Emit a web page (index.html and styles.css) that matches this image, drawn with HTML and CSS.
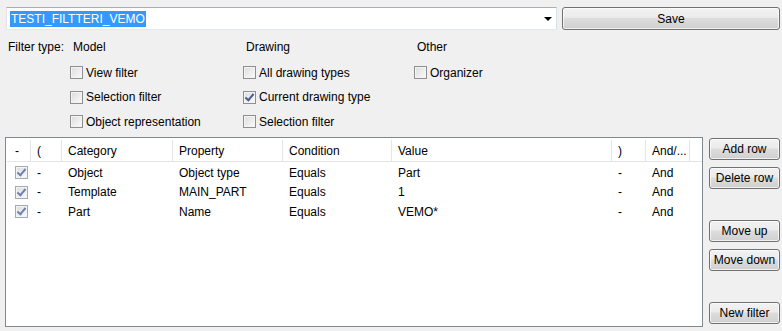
FILE: index.html
```html
<!DOCTYPE html>
<html lang="en">
<head>
    <meta charset="UTF-8">
    <title>Filter</title>
    <link rel="stylesheet" href="styles.css">
</head>
<body>

<!-- Filter name and save -->
<div class="top-row">
    <div class="combo">
        <span class="combo-text">TESTI_FILTTERI_VEMO</span>
        <span class="combo-arrow"></span>
    </div>
    <button class="btn save-btn">Save</button>
</div>

<!-- Filter type options -->
<div class="filter-types">
    <div class="ft-label">Filter type:</div>
    <div class="ft-head">Model</div>
    <div class="ft-head">Drawing</div>
    <div class="ft-head">Other</div>

    <div></div>
    <label class="check"><span class="box"></span>View filter</label>
    <label class="check"><span class="box"></span>All drawing types</label>
    <label class="check"><span class="box"></span>Organizer</label>

    <div></div>
    <label class="check"><span class="box"></span>Selection filter</label>
    <label class="check"><span class="box checked"></span>Current drawing type</label>
    <div></div>

    <div></div>
    <label class="check"><span class="box"></span>Object representation</label>
    <label class="check"><span class="box"></span>Selection filter</label>
    <div></div>
</div>

<!-- Rule table and actions -->
<div class="main">
    <div class="list">
        <div class="row head">
            <div class="cell">-</div>
            <div class="cell">(</div>
            <div class="cell">Category</div>
            <div class="cell">Property</div>
            <div class="cell">Condition</div>
            <div class="cell">Value</div>
            <div class="cell">)</div>
            <div class="cell">And/...</div>
            <div class="cell last"></div>
        </div>
        <div class="row">
            <div class="cell"><span class="box checked soft"></span></div>
            <div class="cell">-</div>
            <div class="cell">Object</div>
            <div class="cell">Object type</div>
            <div class="cell">Equals</div>
            <div class="cell">Part</div>
            <div class="cell">-</div>
            <div class="cell">And</div>
            <div class="cell last"></div>
        </div>
        <div class="row">
            <div class="cell"><span class="box checked soft"></span></div>
            <div class="cell">-</div>
            <div class="cell">Template</div>
            <div class="cell">MAIN_PART</div>
            <div class="cell">Equals</div>
            <div class="cell">1</div>
            <div class="cell">-</div>
            <div class="cell">And</div>
            <div class="cell last"></div>
        </div>
        <div class="row">
            <div class="cell"><span class="box checked soft"></span></div>
            <div class="cell">-</div>
            <div class="cell">Part</div>
            <div class="cell">Name</div>
            <div class="cell">Equals</div>
            <div class="cell">VEMO*</div>
            <div class="cell">-</div>
            <div class="cell">And</div>
            <div class="cell last"></div>
        </div>
    </div>

    <div class="side">
        <button class="btn">Add row</button>
        <button class="btn">Delete row</button>
        <button class="btn gap">Move up</button>
        <button class="btn">Move down</button>
        <button class="btn gap">New filter</button>
    </div>
</div>

</body>
</html>
```

FILE: styles.css
```css
body {
    font-family: "Liberation Sans", Arial, sans-serif;
    font-size: 12px;
    background-color: #f0f0f0;
    color: #000;
    margin: 0;
    padding: 0;
    width: 782px;
    height: 331px;
    overflow: hidden;
}

/* top row */
.top-row {
    display: flex;
    gap: 5px;
    padding: 7px 2px 0 6px;
}

.combo {
    flex: 1;
    height: 21px;
    background-color: #fff;
    border: 1px solid #abadb3;
    border-left-color: #e2e3ea;
    border-right-color: #dbdfe6;
    border-bottom-color: #e3e9ef;
    display: flex;
    align-items: center;
    padding-left: 3px;
}

.combo-text {
    background-color: #3399ff;
    color: #fff;
    line-height: 16px;
    padding: 0 1px;
}

.combo-arrow {
    margin-left: auto;
    margin-right: 4px;
    width: 0;
    height: 0;
    border-left: 4px solid transparent;
    border-right: 4px solid transparent;
    border-top: 4px solid #000;
    margin-top: 1px;
}

.btn {
    font-family: inherit;
    font-size: 12px;
    color: #000;
    height: 23px;
    padding: 0;
    border: 1px solid #707070;
    border-radius: 3px;
    background: linear-gradient(#f2f2f2 0%, #ebebeb 45%, #dddddd 50%, #cfcfcf 100%);
    box-shadow: inset 0 0 0 1px rgba(255, 255, 255, 0.7);
    cursor: pointer;
}

.save-btn {
    width: 218px;
}

/* filter type grid */
.filter-types {
    display: grid;
    grid-template-columns: 62px 173px 171px 1fr;
    grid-template-rows: 26px 25px 24px 25px;
    align-items: center;
    padding: 4px 0 0 8px;
}

.ft-head {
    padding-left: 3px;
}

.check {
    display: flex;
    align-items: center;
    gap: 3px;
}

.box {
    display: inline-block;
    box-sizing: border-box;
    width: 13px;
    height: 13px;
    border: 1px solid #8e8f8f;
    background: linear-gradient(135deg, #dcdcdc, #fbfbfb);
    box-shadow: inset 0 0 0 1px #f4f4f4;
    position: relative;
}

.box.checked::after {
    content: "";
    position: absolute;
    left: 3px;
    top: 0px;
    width: 3px;
    height: 7px;
    border-right: 2px solid #4a5f8f;
    border-bottom: 2px solid #4a5f8f;
    transform: rotate(40deg);
}

.box.soft {
    border-color: #a4a9b7;
}

.box.soft::after {
    border-color: #6e82b4;
}

/* main area */
.main {
    display: flex;
    gap: 6px;
    padding: 3px 0 0 5px;
}

.list {
    box-sizing: border-box;
    width: 698px;
    height: 190px;
    background-color: #fff;
    border: 1px solid #828790;
    padding: 2px 0 0 1px;
}

.row {
    display: grid;
    grid-template-columns: 24px 31px 111px 110px 109px 220px 34px 44px 1fr;
    height: 19.5px;
    align-items: center;
}

.row.head {
    height: 21px;
    border-bottom: 1px solid #e5e5e5;
    margin-bottom: 1px;
}

.cell {
    padding-left: 6px;
    white-space: nowrap;
    overflow: hidden;
}

.row:not(.head) .cell:first-child {
    padding-left: 8px;
    display: flex;
}

.head .cell {
    height: 100%;
    display: flex;
    align-items: center;
    border-right: 1px solid #e5e5e5;
    box-sizing: border-box;
}

.head .cell:first-child {
    padding-left: 8px;
}

.head .cell.last {
    border-right: none;
}

.side {
    display: flex;
    flex-direction: column;
    gap: 7px;
    width: 71px;
    padding-top: 1px;
}

.side .btn {
    height: 22px;
    white-space: nowrap;
}

.side .btn.gap {
    margin-top: 24px;
}
```
